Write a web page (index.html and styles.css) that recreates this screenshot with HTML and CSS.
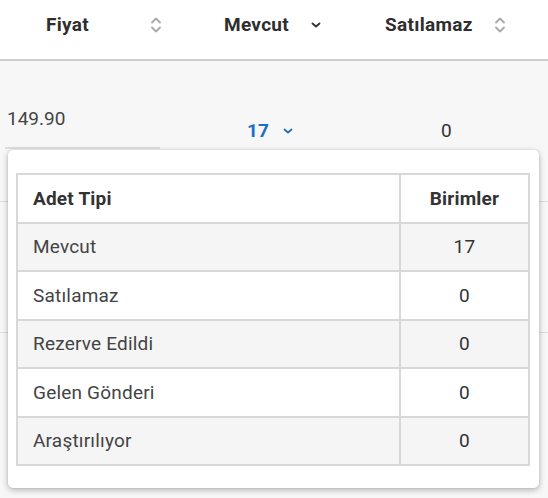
FILE: index.html
```html
<!DOCTYPE html>
<html lang="tr">
<head>
<meta charset="utf-8">
<link rel="stylesheet" href="styles.css">
</head>
<body>
<div class="page">
  <div class="head">
    <div class="hcell c1">
      <span class="htext">Fiyat</span>
      <svg class="sort" width="12" height="18" viewBox="0 0 12 18"><path d="M2 6.5 L6 2.5 L10 6.5 M2 11.5 L6 15.5 L10 11.5" fill="none" stroke="#a8a8a8" stroke-width="1.8" stroke-linecap="round" stroke-linejoin="round"/></svg>
    </div>
    <div class="hcell c2">
      <span class="htext">Mevcut</span>
      <svg class="chev" width="12" height="8" viewBox="0 0 12 8"><path d="M2.5 2.5 L6 5.5 L9.5 2.5" fill="none" stroke="#333" stroke-width="1.9" stroke-linecap="round" stroke-linejoin="round"/></svg>
    </div>
    <div class="hcell c3">
      <span class="htext">Satılamaz</span>
      <svg class="sort" width="12" height="18" viewBox="0 0 12 18"><path d="M2 6.5 L6 2.5 L10 6.5 M2 11.5 L6 15.5 L10 11.5" fill="none" stroke="#a8a8a8" stroke-width="1.8" stroke-linecap="round" stroke-linejoin="round"/></svg>
    </div>
  </div>
  <div class="rows">
    <div class="row r1">
      <div class="cell p1"><span class="price">149.90</span></div>
      <div class="cell p2"><span class="qty">17</span>
        <svg class="bchev" width="12" height="8" viewBox="0 0 12 8"><path d="M2.5 2.5 L6 5.5 L9.5 2.5" fill="none" stroke="#1d6fc5" stroke-width="1.8" stroke-linecap="round" stroke-linejoin="round"/></svg>
      </div>
      <div class="cell p3"><span class="zero">0</span></div>
    </div>
    <div class="row r2"></div>
    <div class="row r3"></div>
  </div>

  <div class="popup">
    <table class="tbl">
      <thead>
        <tr><th class="name">Adet Tipi</th><th class="num">Birimler</th></tr>
      </thead>
      <tbody>
        <tr class="alt"><td class="name">Mevcut</td><td class="num">17</td></tr>
        <tr><td class="name">Satılamaz</td><td class="num">0</td></tr>
        <tr class="alt"><td class="name">Rezerve Edildi</td><td class="num">0</td></tr>
        <tr><td class="name">Gelen Gönderi</td><td class="num">0</td></tr>
        <tr class="alt"><td class="name">Araştırılıyor</td><td class="num">0</td></tr>
      </tbody>
    </table>
  </div>
</div>
</body>
</html>
```
FILE: styles.css
```css
* { box-sizing: border-box; }
html, body { margin: 0; padding: 0; }
body {
  font-family: Roboto, "Liberation Sans", Arial, sans-serif;
  width: 548px;
  height: 498px;
  overflow: hidden;
  background: #f7f7f7;
  color: #333;
}
.page { position: relative; width: 548px; height: 498px; }

.head {
  height: 61px;
  background: #fff;
  border-bottom: 2px solid #cfcfcf;
  display: grid;
  grid-template-columns: 190px 160px 1fr;
  align-items: center;
  padding-bottom: 10px;
}
.hcell { display: flex; align-items: center; justify-content: space-between; }
.htext { font-size: 19px; font-weight: 700; color: #2e2e2e; letter-spacing: 0.3px; }
.c1 { padding: 0 28px 0 46px; }
.c2 { padding: 0 28px 0 34px; }
.c3 { padding: 0 42px 0 35px; }
.chev { margin-top: 1px; }

.rows { display: flex; flex-direction: column; }
.row { border-bottom: 1px solid #dcdcdc; }
.r1 { height: 141px; display: grid; grid-template-columns: 190px 160px 1fr; align-items: start; }
.r2 { height: 131px; }
.r3 { height: 120px; border-bottom: none; }

.p1 { padding: 46px 0 0 5px; }
.price {
  display: block;
  width: 155px;
  padding: 0 0 17px 2px;
  font-size: 19px;
  color: #444;
  border-bottom: 2px solid #dedede;
}
.p2 { padding: 58px 0 0 57px; display: flex; align-items: center; gap: 13px; }
.qty { font-size: 19px; font-weight: 700; color: #1d6fc5; }
.bchev { margin-top: 1px; }
.p3 { padding: 58px 0 0 91px; }
.zero { font-size: 19px; color: #333; }

.popup {
  position: absolute;
  left: 8px;
  top: 150px;
  width: 531px;
  height: 338px;
  background: #fff;
  border-radius: 5px;
  box-shadow: 0 2px 6px rgba(0,0,0,0.28), 0 0 2px rgba(0,0,0,0.12);
  padding: 23px 9px 0 8px;
}
.tbl {
  width: 100%;
  border-collapse: collapse;
  font-size: 19px;
  letter-spacing: 0.2px;
  color: #444;
}
.tbl th, .tbl td {
  border: 2px solid #d8d8d8;
  height: 48.5px;
  padding: 0 0 0 15px;
  vertical-align: middle;
}
.tbl th { font-weight: 700; color: #333; text-align: left; background: #fff; }
.tbl .num { width: 129px; text-align: center; padding: 0; }
.tbl tr.alt td { background: #f5f5f5; }
.tbl td.name { color: #444; }
.tbl td.num { color: #333; }
```
